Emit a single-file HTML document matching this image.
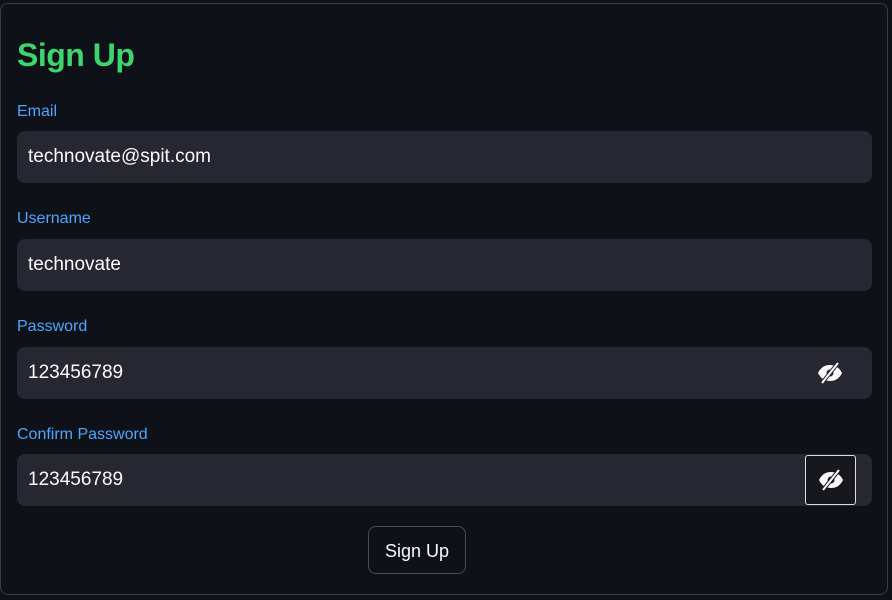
<!DOCTYPE html>
<html><head><style>
html,body{margin:0;padding:0;background:#0e1117;width:892px;height:600px;overflow:hidden;font-family:"Liberation Sans",sans-serif}
.box{position:absolute;left:0;top:3px;width:888px;height:592px;border:1px solid #3b3d45;border-radius:8px;box-sizing:border-box}
h1{position:absolute;left:17px;top:37px;margin:0;font-size:32px;font-weight:bold;color:#3dd56d;letter-spacing:-0.5px}
.lbl{position:absolute;left:17px;font-size:16px;color:#4ea6ff}
.inp{position:absolute;left:17px;width:855px;height:52px;background:#262730;border-radius:8px;color:#fafafa;font-size:19px;line-height:52px;padding-left:11px;box-sizing:border-box}
.eye{position:absolute;width:50px;height:50px;top:1px;display:flex;align-items:center;justify-content:center}
.btn{position:absolute;left:368px;top:526px;width:98px;height:48px;border:1px solid #4a4c55;border-radius:8px;box-sizing:border-box;color:#fafafa;font-size:18px;text-align:center;line-height:48px}
</style></head><body>
<div class="box"></div>
<h1>Sign Up</h1>
<div class="lbl" style="top:103px">Email</div>
<div class="inp" style="top:131px">technovate@spit.com</div>
<div class="lbl" style="top:210px">Username</div>
<div class="inp" style="top:239px">technovate</div>
<div class="lbl" style="top:318px">Password</div>
<div class="inp" style="top:347px">123456789
<div class="eye" style="left:788px"><svg width="26" height="24" viewBox="0 0 26 24"><path d="M1 12C4 6 8 4 13 4s9 2 12 8c-3 6-7 8-12 8S4 18 1 12z" fill="#fafafa"/><circle cx="13" cy="12" r="3.5" fill="#262730"/><path d="M5 22L21 2" stroke="#262730" stroke-width="4"/><path d="M5 22L21 2" stroke="#fafafa" stroke-width="2"/></svg></div></div>
<div class="lbl" style="top:426px">Confirm Password</div>
<div class="inp" style="top:454px">123456789
<div class="eye" style="left:788px;background:#17181d;border:1px solid #ddd;border-radius:3px;box-sizing:border-box;width:51px;height:50px"><svg width="26" height="24" viewBox="0 0 26 24"><path d="M1 12C4 6 8 4 13 4s9 2 12 8c-3 6-7 8-12 8S4 18 1 12z" fill="#fafafa"/><circle cx="13" cy="12" r="3.5" fill="#17181d"/><path d="M5 22L21 2" stroke="#17181d" stroke-width="4"/><path d="M5 22L21 2" stroke="#fafafa" stroke-width="2"/></svg></div></div>
<div class="btn">Sign Up</div>
</body></html>
